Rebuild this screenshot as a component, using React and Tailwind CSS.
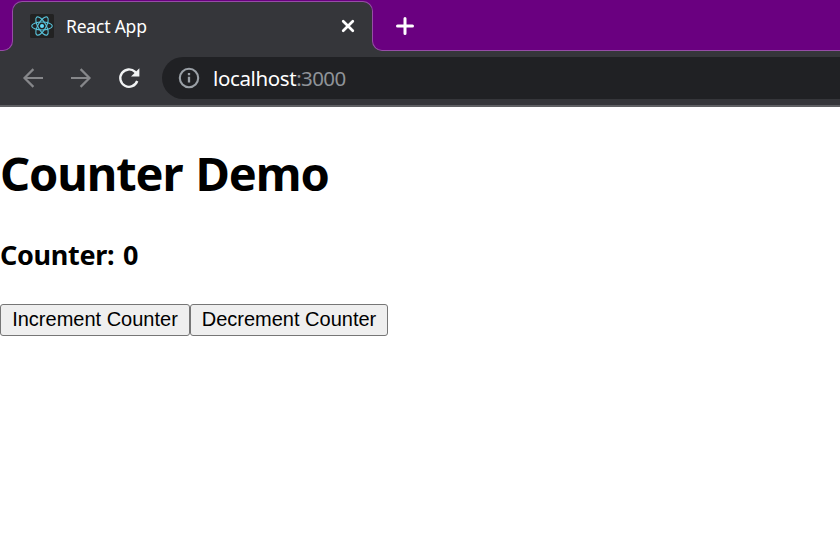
function ReactLogo() {
  return (
    <svg viewBox="0 0 24 24" className="h-6 w-6 shrink-0" fill="none" stroke="#58c4dc" strokeWidth="1.1">
      <rect width="24" height="24" rx="1.5" fill="#222222" stroke="none" />
      <circle cx="12" cy="12" r="2" fill="#61dafb" stroke="none" />
      <ellipse cx="12" cy="12" rx="10.3" ry="4" />
      <ellipse cx="12" cy="12" rx="10.3" ry="4" transform="rotate(60 12 12)" />
      <ellipse cx="12" cy="12" rx="10.3" ry="4" transform="rotate(120 12 12)" />
    </svg>
  );
}

function TabStrip() {
  return (
    <div className="flex h-[51px] items-end bg-[#6a0080]">
      <div className="relative z-10 -mr-px h-[26px] w-[13px] bg-[#35363a]">
        <div className="h-full w-full rounded-br-[10px] border-r border-b border-[#964da6] bg-[#6a0080]" />
      </div>
      <div className="flex h-[50px] w-[361px] items-center rounded-t-[10px] border-x border-t border-[#964da6] bg-[#35363a] pr-[16px] pb-[2px] pl-[17px]">
        <ReactLogo />
        <span className="ml-[12px] text-[17.5px] leading-6 tracking-[-0.2px] whitespace-nowrap text-white">React App</span>
        <svg viewBox="0 0 16 16" className="ml-auto h-4 w-4" stroke="#fff" strokeWidth="2.7" strokeLinecap="round">
          <path d="M3.2 3.2 12.8 12.8M12.8 3.2 3.2 12.8" />
        </svg>
      </div>
      <div className="relative z-10 -ml-px h-[26px] flex-1 bg-[#35363a]">
        <div className="flex h-full rounded-bl-[10px] border-b border-l border-[#964da6] bg-[#6a0080]">
          <svg viewBox="0 0 20 20" className="-mt-[9px] ml-[22px] h-5 w-5" stroke="#fff" strokeWidth="3" strokeLinecap="round">
            <path d="M10 2.5v15M2.5 10h15" />
          </svg>
        </div>
      </div>
    </div>
  );
}

function Toolbar() {
  return (
    <div className="flex h-[56px] items-center border-b-2 border-[#5f6063] bg-[#35363a] pl-[21px]">
      <svg viewBox="0 0 24 24" className="h-6 w-6" fill="none" stroke="#86878a" strokeWidth="2.2">
        <path d="M22 12H3.8M12.4 3.1 3.5 12l8.9 8.9" />
      </svg>
      <svg viewBox="0 0 24 24" className="ml-6 h-6 w-6" fill="none" stroke="#86878a" strokeWidth="2.2">
        <path d="M2 12h18.2M11.6 3.1l8.9 8.9-8.9 8.9" />
      </svg>
      <svg viewBox="0 0 24 24" className="ml-6 h-6 w-6" fill="none" stroke="#f1f3f4" strokeWidth="2.4">
        <path d="M20.2 15A8.7 8.7 0 1 1 18.1 5.9L19 6.8" />
        <path d="M22.4 2.2V10.6H14z" fill="#f1f3f4" stroke="none" />
      </svg>
      <div className="ml-[21px] flex h-[42px] flex-1 items-center rounded-l-full bg-[#202124] pl-[16px]">
        <svg viewBox="0 0 22 22" className="h-[22px] w-[22px]" fill="none" stroke="#9aa0a6" strokeWidth="2.1">
          <circle cx="11" cy="11" r="9.2" />
          <path d="M11 9.8v5.6M11 6v2.2" strokeWidth="2.3" />
        </svg>
        <span className="ml-[13px] text-[20.5px] leading-6 tracking-[-0.38px] whitespace-nowrap text-white">
          localhost<span className="tracking-[-0.6px] text-[#8f9398]">:3000</span>
        </span>
      </div>
    </div>
  );
}

function CounterButton({ children, width }) {
  return (
    <button className={`h-8 rounded-[3px] border border-[#767676] bg-[#efefef] pb-[2px] text-center font-['Liberation_Sans',sans-serif] text-[20px] leading-[28px] whitespace-nowrap text-black ${width}`}>
      {children}
    </button>
  );
}

export default function App() {
  return (
    <div className="h-[537px] w-[840px] overflow-hidden bg-white font-['Noto_Sans',sans-serif]">
      <TabStrip />
      <Toolbar />
      <main className="text-black">
        <h1 className="mt-[34px] text-[47px] leading-[64px] font-bold tracking-[-1.1px] [word-spacing:2px] whitespace-nowrap">Counter Demo</h1>
        <h3 className="mt-[32px] text-[27px] leading-[36px] font-bold tracking-[-0.3px] [word-spacing:2px] whitespace-nowrap">Counter: 0</h3>
        <div className="mt-[31px] flex">
          <CounterButton width="w-[190px]">Increment Counter</CounterButton>
          <CounterButton width="w-[198px]">Decrement Counter</CounterButton>
        </div>
      </main>
    </div>
  );
}
